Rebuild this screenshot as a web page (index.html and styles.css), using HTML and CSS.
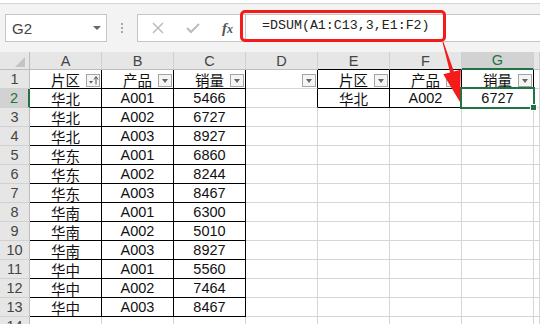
FILE: index.html
```html
<!DOCTYPE html>
<html>
<head>
<meta charset="utf-8">
<title>DSUM</title>
<link rel="stylesheet" href="styles.css">
</head>
<body>
<div class="toolbar">
	<div class="namebox"><span>G2</span><i></i></div>
	<div class="grip"><i></i><i></i><i></i></div>
	<div class="fxbtns">
		<span><svg width="12" height="12" viewBox="0 0 12 12"><path d="M1 1L11 11M11 1L1 11" stroke="#bcbcbc" stroke-width="1.5" fill="none"/></svg></span>
		<span><svg width="14" height="12" viewBox="0 0 14 12"><path d="M1 6L5 10L13 2" stroke="#bcbcbc" stroke-width="2" fill="none"/></svg></span>
		<span class="fx">f<small>x</small></span>
	</div>
	<div class="fbar"><div class="formula">=DSUM(A1:C13,3,E1:F2)</div></div>
</div>

<div class="sheet">
	<div class="corner"><i></i></div><div class="ch">A</div><div class="ch">B</div><div class="ch">C</div><div class="ch">D</div><div class="ch bb">E</div><div class="ch bb">F</div><div class="ch g">G</div><div class="ch"></div>

	<div class="rh">1</div>
	<div class="b">片区<span class="fb sort"><svg width="12" height="11" viewBox="0 0 12 11"><path d="M2 6H6L4 8.5Z" fill="#555"/><path d="M9 9.5V2" stroke="#555" stroke-width="1"/><path d="M7 4.5L9 1.5L11 4.5" stroke="#555" stroke-width="1" fill="none"/></svg></span></div>
	<div class="b">产品<span class="fb"></span></div>
	<div class="b">销量<span class="fb"></span></div>
	<div class="rb"><span class="fb"></span></div>
	<div class="b">片区<span class="fb"></span></div>
	<div class="b">产品<span class="fb"></span></div>
	<div class="b">销量<span class="fb"></span></div>
	<div></div>

	<div class="rh on">2</div><div class="b">华北</div><div class="b">A001</div><div class="b">5466</div><div class="rb"></div><div class="b">华北</div><div class="b">A002</div><div class="b sel">6727<span class="handle"></span></div><div></div>
	<div class="rh">3</div><div class="b">华北</div><div class="b">A002</div><div class="b">6727</div><div></div><div></div><div></div><div></div><div></div>
	<div class="rh">4</div><div class="b">华北</div><div class="b">A003</div><div class="b">8927</div><div></div><div></div><div></div><div></div><div></div>
	<div class="rh">5</div><div class="b">华东</div><div class="b">A001</div><div class="b">6860</div><div></div><div></div><div></div><div></div><div></div>
	<div class="rh">6</div><div class="b">华东</div><div class="b">A002</div><div class="b">8244</div><div></div><div></div><div></div><div></div><div></div>
	<div class="rh">7</div><div class="b">华东</div><div class="b">A003</div><div class="b">8467</div><div></div><div></div><div></div><div></div><div></div>
	<div class="rh">8</div><div class="b">华南</div><div class="b">A001</div><div class="b">6300</div><div></div><div></div><div></div><div></div><div></div>
	<div class="rh">9</div><div class="b">华南</div><div class="b">A002</div><div class="b">5010</div><div></div><div></div><div></div><div></div><div></div>
	<div class="rh">10</div><div class="b">华南</div><div class="b">A003</div><div class="b">8927</div><div></div><div></div><div></div><div></div><div></div>
	<div class="rh">11</div><div class="b">华中</div><div class="b">A001</div><div class="b">5560</div><div></div><div></div><div></div><div></div><div></div>
	<div class="rh">12</div><div class="b">华中</div><div class="b">A002</div><div class="b">7464</div><div></div><div></div><div></div><div></div><div></div>
	<div class="rh">13</div><div class="b">华中</div><div class="b">A003</div><div class="b">8467</div><div></div><div></div><div></div><div></div><div></div>
	<div class="rh">14</div><div></div><div></div><div></div><div></div><div></div><div></div><div></div><div></div>
</div>

<svg class="arrow" width="540" height="324" viewBox="0 0 540 324"><path d="M443.5 41.9L453.9 71.5L460.7 69.7L460 102L443.3 74.3L450.1 72.5L442.5 42.2Z" fill="#f41b1b"/></svg>
</body>
</html>
```

FILE: styles.css
```css
*{margin:0; padding:0; box-sizing:border-box;}
body{width:540px; height:324px; overflow:hidden; position:relative; background:#fff; font-family:"Liberation Sans","Noto Sans CJK SC",sans-serif;}

.toolbar{margin-top:3px; height:49px; border-top:1px solid #d6d6d6; background:#f3f3f3; display:flex; align-items:flex-start; padding-top:10px;}
.namebox{margin-left:5px; width:102px; height:28px; border:1px solid #c6c6c6; background:#fff; display:flex; align-items:center; justify-content:space-between; padding:0 5px 0 6px; font-size:15px; color:#444;}
.namebox i{border-left:4px solid transparent; border-right:4px solid transparent; border-top:4px solid #666;}
.grip{width:30px; height:28px; display:flex; flex-direction:column; align-items:center; justify-content:center; gap:2px;}
.grip i{width:2px; height:2px; background:#a8a8a8;}
.fxbtns{width:109px; height:28px; border:1px solid #c6c6c6; background:#fff; display:flex; align-items:center; padding-left:2px;}
.fxbtns span{width:36px; display:flex; justify-content:center; align-items:baseline;}
.fxbtns .fx{font-family:"Liberation Serif",serif; font-style:italic; font-weight:bold; font-size:15px; color:#555;}
.fxbtns .fx small{font-size:12px;}
.fbar{flex:1; height:28px; border:1px solid #c6c6c6; border-left:none; border-right:none; background:#fff;}
.formula{margin:-5px 0 0 -6px; width:206px; height:32px; border:3px solid #f41b1b; border-radius:5px; padding-left:19px; font-family:"Liberation Mono",monospace; font-size:13.3px; line-height:26px; color:#222;}

.sheet{display:grid; grid-template-columns:30px repeat(7,72px) 6px; grid-template-rows:18px; grid-auto-rows:19px; font-size:14.5px; color:#111;}
.sheet > div{border-right:1px solid #d6d6d6; border-bottom:1px solid #d6d6d6; display:flex; align-items:center; justify-content:center; position:relative; white-space:nowrap;}
.sheet .ch, .sheet .rh, .sheet .corner{background:#e6e6e6; color:#444; border-color:#d0d0d0;}
.sheet .ch, .sheet .corner{border-bottom-color:#bdbdbd;}
.sheet .rh, .sheet .corner{border-right-color:#bdbdbd;}
.sheet .corner{justify-content:flex-end; align-items:flex-end; padding:0 4px 2px 0;}
.corner i{border-left:10px solid transparent; border-bottom:10px solid #c4c4c4;}
.sheet .ch.g{background:#d2d2d2; color:#217346; border-bottom:2px solid #217346;}
.sheet .rh.on{background:#d2d2d2; color:#217346; border-right:2px solid #217346;}
.sheet .ch.bb{border-bottom-color:#000;}
.sheet .b{border-color:#000;}
.sheet .rb{border-right-color:#000;}

.fb{position:absolute; right:1px; bottom:1px; width:14px; height:13px; border:1px solid #a6a6a6; background:#f4f4f4; display:flex; align-items:center; justify-content:center;}
.fb::after{content:""; border-left:3.5px solid transparent; border-right:3.5px solid transparent; border-top:4px solid #666;}
.fb.sort::after{display:none;}

.sel::after{content:""; position:absolute; left:-2px; top:-2px; right:-2px; bottom:-2px; border:2px solid #217346; z-index:2;}
.handle{position:absolute; right:-4px; bottom:-4px; width:7px; height:7px; background:#217346; border:1px solid #fff; z-index:3;}

.arrow{position:absolute; left:0; top:0; z-index:5; pointer-events:none;}
```
